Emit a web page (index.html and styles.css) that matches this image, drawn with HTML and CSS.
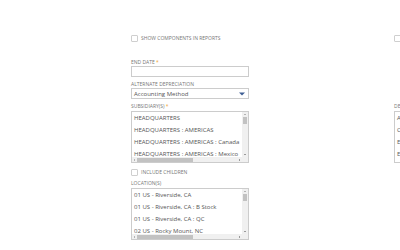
FILE: index.html
```html
<!DOCTYPE html>
<html lang="en">
<head>
    <meta charset="UTF-8">
    <meta name="viewport" content="width=device-width, initial-scale=1.0">
    <title>Asset Report</title>
    <link rel="stylesheet" href="styles.css">
</head>
<body>
    <div class="form">
        <div class="col col-main">
            <label class="check">
                <span class="box"></span>
                <span class="check-text">Show components in reports</span>
            </label>

            <div class="field first">
                <div class="label">End date <span class="req">*</span></div>
                <div class="input"></div>
            </div>

            <div class="field">
                <div class="label">Alternate depreciation</div>
                <div class="select">
                    <span>Accounting Method</span>
                    <svg class="arrow" width="6" height="4" viewBox="0 0 6 4"><path d="M0 0.5H6L3 3.5Z" fill="#3f5f94"/></svg>
                </div>
            </div>

            <div class="field">
                <div class="label">Subsidiary(s) <span class="req">*</span></div>
                <div class="listbox">
                    <div class="items">
                        <div class="item">HEADQUARTERS</div>
                        <div class="item">HEADQUARTERS : AMERICAS</div>
                        <div class="item">HEADQUARTERS : AMERICAS : Canada</div>
                        <div class="item">HEADQUARTERS : AMERICAS : Mexico</div>
                    </div>
                    <div class="vbar"><span class="up"></span><span class="vthumb"></span><span class="down"></span></div>
                    <div class="hbar"><span class="left"></span><span class="hthumb"></span><span class="right"></span></div>
                    <div class="corner"></div>
                </div>
            </div>

            <label class="check check-children">
                <span class="box"></span>
                <span class="check-text">Include children</span>
            </label>

            <div class="field field-loc">
                <div class="label">Location(s)</div>
                <div class="listbox">
                    <div class="items">
                        <div class="item">01 US - Riverside, CA</div>
                        <div class="item">01 US - Riverside, CA : B Stock</div>
                        <div class="item">01 US - Riverside, CA : QC</div>
                        <div class="item">02 US - Rocky Mount, NC</div>
                    </div>
                    <div class="vbar"><span class="up"></span><span class="vthumb"></span><span class="down"></span></div>
                    <div class="hbar"><span class="left"></span><span class="hthumb"></span><span class="right"></span></div>
                    <div class="corner"></div>
                </div>
            </div>
        </div>

        <div class="col col-side">
            <div class="check">
                <span class="box"></span>
            </div>

            <div class="field side-field">
                <div class="label">De</div>
                <div class="listbox listbox-side">
                    <div class="items">
                        <div class="item">A</div>
                        <div class="item">C</div>
                        <div class="item">E</div>
                        <div class="item">E</div>
                    </div>
                </div>
            </div>
        </div>
    </div>
</body>
</html>
```

FILE: styles.css
```css
body {
    margin: 0;
    font-family: "Open Sans", "Liberation Sans", sans-serif;
    background-color: #fff;
    color: #444;
    overflow: hidden;
}
.form {
    display: flex;
    gap: 145px;
    padding: 34px 0 0 131px;
}
.col-main {
    width: 118px;
    flex: none;
}
.col-side {
    width: 6px;
    flex: none;
}
.check {
    display: flex;
    align-items: center;
    height: 8px;
}
.box {
    width: 7px;
    height: 7px;
    border: 1px solid #cfcfcf;
    border-radius: 1px;
    box-sizing: border-box;
    flex: none;
}
.check-text {
    margin-left: 3px;
    font-size: 5px;
    line-height: 8px;
    text-transform: uppercase;
    color: #777;
    white-space: nowrap;
}
.field {
    margin-top: 4px;
}
.field.first {
    margin-top: 17px;
}
.label {
    font-size: 5px;
    line-height: 7px;
    text-transform: uppercase;
    color: #777;
    white-space: nowrap;
}
.req {
    color: #f0a32f;
}
.input, .select {
    height: 11px;
    border: 1px solid #ccc;
    box-sizing: border-box;
    background-color: #fff;
}
.select {
    display: flex;
    align-items: center;
    justify-content: space-between;
    padding: 0 2px;
    font-size: 6px;
    color: #555;
}
.arrow {
    margin-right: 1px;
}
.listbox {
    display: grid;
    grid-template-columns: 1fr 6px;
    grid-template-rows: 1fr 5px;
    height: 52px;
    margin-top: 1px;
    border: 1px solid #ccc;
    box-sizing: border-box;
    overflow: hidden;
}
.listbox-side {
    display: block;
    border-right: none;
}
.items {
    padding: 0 0 0 2px;
    overflow: hidden;
}
.item {
    font-size: 6px;
    line-height: 12px;
    white-space: nowrap;
    color: #555;
}
.vbar {
    display: flex;
    flex-direction: column;
    align-items: center;
    background-color: #f0f0f0;
}
.up, .down {
    width: 0;
    height: 0;
    border-left: 1.5px solid transparent;
    border-right: 1.5px solid transparent;
    margin: 2px 0;
}
.up {
    border-bottom: 1.5px solid #777;
}
.down {
    border-top: 1.5px solid #444;
    margin-top: auto;
}
.vthumb {
    width: 4px;
    height: 7px;
    background-color: #c2c2c2;
}
.hbar {
    display: flex;
    align-items: center;
    background-color: #f0f0f0;
}
.left, .right {
    width: 0;
    height: 0;
    border-top: 1.5px solid transparent;
    border-bottom: 1.5px solid transparent;
    margin: 0 2px;
}
.left {
    border-right: 1.5px solid #777;
}
.right {
    border-left: 1.5px solid #444;
    margin-left: auto;
}
.hthumb {
    width: 56px;
    height: 4px;
    background-color: #c2c2c2;
}
.corner {
    background-color: #f0f0f0;
}
.check-children {
    margin-top: 5px;
}
.field-loc {
    margin-top: 4px;
}
.side-field {
    margin-top: 61px;
}
```
